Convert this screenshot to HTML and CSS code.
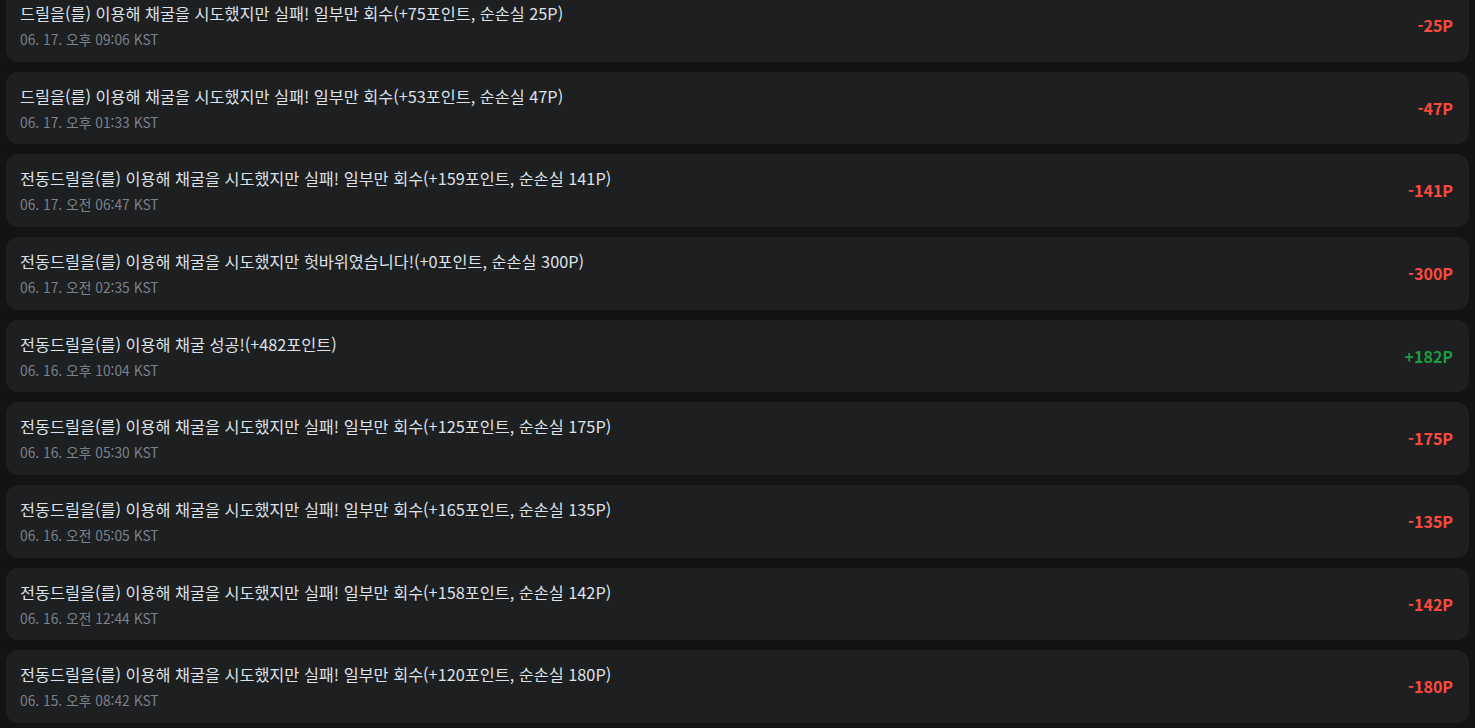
FILE: index.html
```html
<!DOCTYPE html>
<html lang="ko">
<head>
<meta charset="utf-8">
<link rel="stylesheet" href="styles.css">
</head>
<body>
<div class="list">
  <div class="item"><div class="info"><div class="title">드릴을(를) 이용해 채굴을 시도했지만 실패! 일부만 회수(+75포인트, 순손실 25P)</div><div class="date">06. 17. 오후 09:06 KST</div></div><div class="amount minus">-25P</div></div>
  <div class="item"><div class="info"><div class="title">드릴을(를) 이용해 채굴을 시도했지만 실패! 일부만 회수(+53포인트, 순손실 47P)</div><div class="date">06. 17. 오후 01:33 KST</div></div><div class="amount minus">-47P</div></div>
  <div class="item"><div class="info"><div class="title">전동드릴을(를) 이용해 채굴을 시도했지만 실패! 일부만 회수(+159포인트, 순손실 141P)</div><div class="date">06. 17. 오전 06:47 KST</div></div><div class="amount minus">-141P</div></div>
  <div class="item"><div class="info"><div class="title">전동드릴을(를) 이용해 채굴을 시도했지만 헛바위였습니다!(+0포인트, 순손실 300P)</div><div class="date">06. 17. 오전 02:35 KST</div></div><div class="amount minus">-300P</div></div>
  <div class="item"><div class="info"><div class="title">전동드릴을(를) 이용해 채굴 성공!(+482포인트)</div><div class="date">06. 16. 오후 10:04 KST</div></div><div class="amount plus">+182P</div></div>
  <div class="item"><div class="info"><div class="title">전동드릴을(를) 이용해 채굴을 시도했지만 실패! 일부만 회수(+125포인트, 순손실 175P)</div><div class="date">06. 16. 오후 05:30 KST</div></div><div class="amount minus">-175P</div></div>
  <div class="item"><div class="info"><div class="title">전동드릴을(를) 이용해 채굴을 시도했지만 실패! 일부만 회수(+165포인트, 순손실 135P)</div><div class="date">06. 16. 오전 05:05 KST</div></div><div class="amount minus">-135P</div></div>
  <div class="item"><div class="info"><div class="title">전동드릴을(를) 이용해 채굴을 시도했지만 실패! 일부만 회수(+158포인트, 순손실 142P)</div><div class="date">06. 16. 오전 12:44 KST</div></div><div class="amount minus">-142P</div></div>
  <div class="item"><div class="info"><div class="title">전동드릴을(를) 이용해 채굴을 시도했지만 실패! 일부만 회수(+120포인트, 순손실 180P)</div><div class="date">06. 15. 오후 08:42 KST</div></div><div class="amount minus">-180P</div></div>
</div>
</body>
</html>
```
FILE: styles.css
```css
html, body {
  margin: 0;
  padding: 0;
  background: #131313;
  overflow: hidden;
}
body {
  font-family: "Noto Sans CJK KR", "Noto Sans", sans-serif;
}
.list {
  display: flex;
  flex-direction: column;
  gap: 10px;
  padding: 0 6px;
  margin-top: -11px;
}
.item {
  display: flex;
  align-items: center;
  justify-content: space-between;
  background: #1e1f21;
  border-radius: 12px;
  padding: 12px 16px 12.67px 14px;
  height: 48px;
}
.info {
  display: flex;
  flex-direction: column;
  gap: 4px;
}
.title {
  font-size: 16.3px;
  line-height: 24px;
  color: #dde1e8;
}
.date {
  font-size: 13.8px;
  line-height: 20px;
  color: #7a818c;
}
.amount {
  font-size: 16px;
  font-weight: 700;
  line-height: 24px;
}
.minus { color: #ff4b3e; }
.plus { color: #1d9b43; }
```
